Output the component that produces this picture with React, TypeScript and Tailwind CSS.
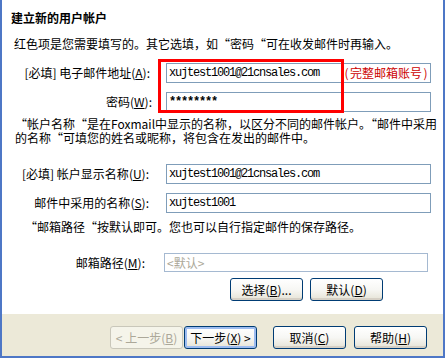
import React from "react";

const cjk = { fontFamily: '"Noto Sans CJK SC", "Noto Sans", sans-serif' };
const mono = { fontFamily: '"Liberation Mono", "DejaVu Sans Mono", monospace' };

function Key({ k }: { k: string }) {
  return (
    <>
      (<span className="underline">{k}</span>)
    </>
  );
}

function XPButton({
  children,
  className = "",
  disabled = false,
  def = false,
}: {
  children: React.ReactNode;
  className?: string;
  disabled?: boolean;
  def?: boolean;
}) {
  if (disabled) {
    return (
      <div
        className={
          "h-[23px] w-[73px] flex items-center justify-center rounded-[3px] border border-[#c9c7ba] bg-[#f5f4ea] text-[#aca899] text-[12px] leading-none whitespace-nowrap " +
          className
        }
      >
        {children}
      </div>
    );
  }
  return (
    <div
      className={
        "h-[23px] w-[73px] flex items-center justify-center rounded-[3px] border border-[#003c74] bg-linear-to-b from-white via-[#f7f7f4] to-[#e6e3d6] text-black text-[12px] leading-none whitespace-nowrap " +
        (def ? "shadow-[inset_0_0_0_2px_#9dbcf0] " : "shadow-[inset_0_-2px_0_#d6d0c5] ") +
        className
      }
    >
      {children}
    </div>
  );
}

function Field({
  children,
  className = "",
}: {
  children?: React.ReactNode;
  className?: string;
}) {
  return (
    <div
      className={
        "relative h-[20px] w-[265px] border border-[#7f9db9] bg-white flex items-center pl-[2px] " +
        className
      }
    >
      {children}
    </div>
  );
}

export default function App() {
  return (
    <div
      className="w-[445px] h-[358px] flex flex-col border-l-2 border-r-2 border-b-2 border-[#4e77c6] text-black text-[12px]"
      style={cjk}
    >
      <div className="relative h-[314px] bg-white flex flex-col">
        <div className="pt-[10px] pl-[9px] h-[26px] font-bold text-[12px] leading-[16px]">
          建立新的用户帐户
        </div>
        <div className="mt-[10px] pl-[12px] h-[16px] leading-[16px] whitespace-nowrap">
          红色项是您需要填写的。其它选填，如“密码“可在收发邮件时再输入。
        </div>

        {/* Row 1 */}
        <div className="mt-[11px] flex items-center">
          <div className="w-[148px] text-right whitespace-nowrap leading-[16px]">
            [必填] 电子邮件地址<Key k="A" />:
          </div>
          <Field className="ml-[16px]">
            <span className="text-[12px] tracking-[-1.2px]" style={mono}>
              xujtest1001@21cnsales.com
            </span>
            <span className="absolute right-[1px] top-[1px] text-[#cc0000] text-[12px] leading-[16px] whitespace-nowrap flex">
              <span className="inline-block w-[7px] text-center">(</span>
              完整邮箱账号
              <span className="inline-block w-[7px] text-center">)</span>
            </span>
          </Field>
        </div>

        {/* Row 2 */}
        <div className="mt-[9px] flex items-center">
          <div className="w-[150px] text-right whitespace-nowrap leading-[16px]">
            密码<Key k="W" />:
          </div>
          <Field className="ml-[14px]">
            <span className="text-[12px] font-bold tracking-[-1.2px]" style={mono}>
              ********
            </span>
          </Field>
        </div>

        <div className="mt-[5px] pl-[13px] leading-[14px] whitespace-nowrap">
          <div>“帐户名称“是在Foxmail中显示的名称，以区分不同的邮件帐户。“邮件中采用</div>
          <div>的名称“可填您的姓名或昵称，将包含在发出的邮件中。</div>
        </div>

        {/* Row 3 */}
        <div className="mt-[19px] flex items-center">
          <div className="w-[147px] text-right whitespace-nowrap leading-[16px]">
            [必填] 帐户显示名称<Key k="U" />:
          </div>
          <Field className="ml-[17px]">
            <span className="text-[12px] tracking-[-1.2px]" style={mono}>
              xujtest1001@21cnsales.com
            </span>
          </Field>
        </div>

        {/* Row 4 */}
        <div className="mt-[9px] flex items-center">
          <div className="w-[147px] text-right whitespace-nowrap leading-[16px]">
            邮件中采用的名称<Key k="S" />:
          </div>
          <Field className="ml-[17px]">
            <span className="text-[12px] tracking-[-1.2px]" style={mono}>
              xujtest1001
            </span>
          </Field>
        </div>

        <div className="mt-[7px] pl-[23px] leading-[14px] whitespace-nowrap">
          “邮箱路径“按默认即可。您也可以自行指定邮件的保存路径。
        </div>

        {/* Row 5 */}
        <div className="mt-[19px] flex items-center">
          <div className="w-[143px] text-right whitespace-nowrap leading-[16px]">
            邮箱路径<Key k="M" />:
          </div>
          <div className="ml-[19px] h-[19px] w-[264px] border border-[#a5b9d1] bg-white flex items-center pl-[2px] text-[#aca899] leading-none">
            &lt;默认&gt;
          </div>
        </div>

        <div className="mt-[6px] flex pl-[228px]">
          <XPButton>
            选择<Key k="B" />...
          </XPButton>
          <XPButton className="ml-[7px]">
            默认<Key k="D" />
          </XPButton>
        </div>

        {/* red annotation rectangle */}
        <div className="absolute left-[156px] top-[59px] w-[186px] h-[54px] border-[3px] border-[#ff0000] pointer-events-none" />
      </div>

      <div className="h-[42px] bg-[#ece9d8] flex items-start pt-[12px] pl-[108px]">
        <XPButton disabled>
          &lt; 上一步<Key k="B" />
        </XPButton>
        <XPButton def className="ml-[1px]">
          下一步<Key k="X" /> &gt;
        </XPButton>
        <XPButton className="ml-[16px]">
          取消<Key k="C" />
        </XPButton>
        <XPButton className="ml-[8px]">
          帮助<Key k="H" />
        </XPButton>
      </div>
    </div>
  );
}
